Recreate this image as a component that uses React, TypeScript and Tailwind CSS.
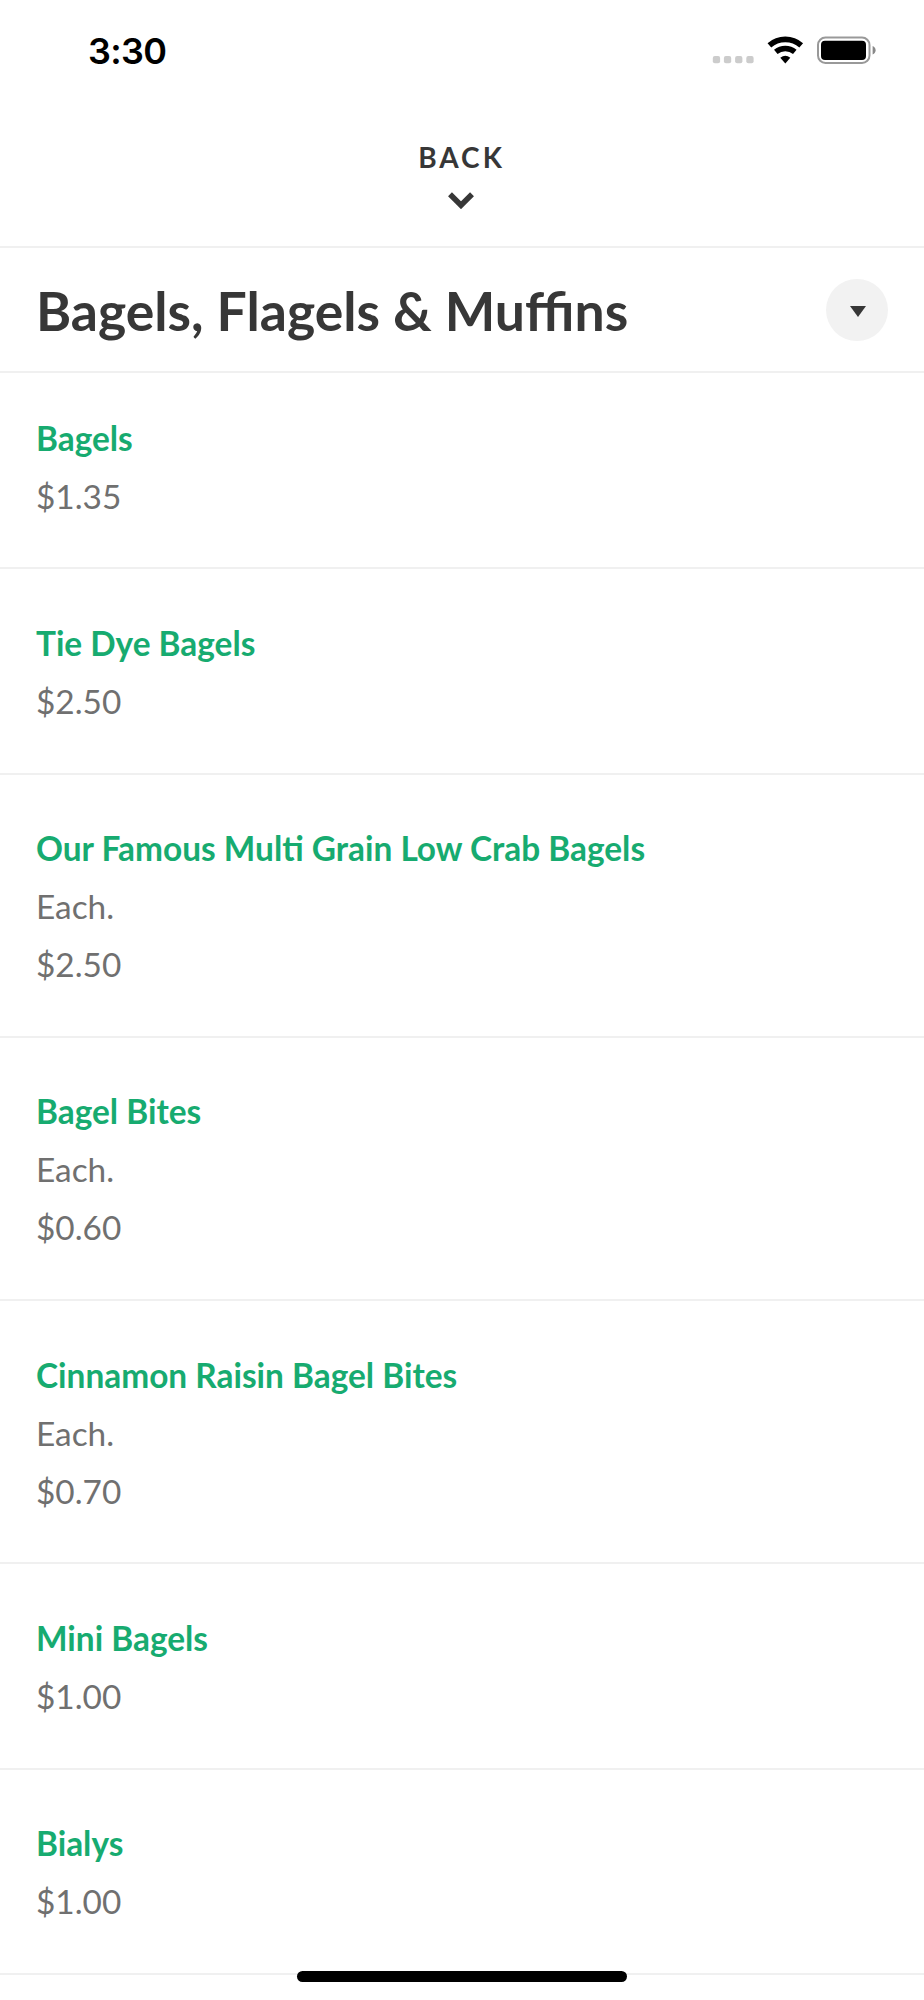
const items: { name: string; lines: string[] }[] = [
  { name: "Bagels", lines: ["$1.35"] },
  { name: "Tie Dye Bagels", lines: ["$2.50"] },
  { name: "Our Famous Multi Grain Low Crab Bagels", lines: ["Each.", "$2.50"] },
  { name: "Bagel Bites", lines: ["Each.", "$0.60"] },
  { name: "Cinnamon Raisin Bagel Bites", lines: ["Each.", "$0.70"] },
  { name: "Mini Bagels", lines: ["$1.00"] },
  { name: "Bialys", lines: ["$1.00"] },
];

function StatusBar() {
  return (
    <div className="flex h-[100px] items-center justify-between pl-[88px] pr-[48px]">
      <span className="pt-[2px] font-[Inter,sans-serif] text-[36px] font-semibold leading-[44px] tracking-[-0.7px] text-black">3:30</span>
      <svg width="164" height="32" viewBox="0 0 164 32">
        <g fill="#cccccc">
          <rect x="0.8" y="22" width="7.300" height="7.300" rx="2" />
          <rect x="11.900" y="22" width="7.300" height="7.300" rx="2" />
          <rect x="23.100" y="22" width="7.300" height="7.300" rx="2" />
          <rect x="34.300" y="22" width="7.300" height="7.300" rx="2" />
        </g>
        <g fill="none" stroke="#000" strokeWidth="5.600">
          <path d="M57.400 11.400A24 24 0 0 1 89.200 11.400" />
          <path d="M63.800 17.900A15 15 0 0 1 82.800 17.900" />
        </g>
        <path d="M68.300 23.800A8 8 0 0 1 78.300 23.800L73.300 29.400Z" />
        <rect x="106" y="3.500" width="51.500" height="25.500" rx="7.500" fill="none" stroke="#999" strokeWidth="2" />
        <rect x="109" y="6.700" width="45" height="19.300" rx="4" />
        <path d="M160.600 12v8.500q3-1.300 3-4.250t-3-4.250" fill="#888" />
      </svg>
    </div>
  );
}

export default function App() {
  return (
    <div className="relative h-[2000px] w-[924px] overflow-hidden bg-white font-[Lato,sans-serif]">
      <StatusBar />
      <button className="flex h-[148px] w-full flex-col items-center border-b-2 border-[#f0f0f0] pr-[3px] pt-[40px]">
        <span className="pl-[2px] text-[28px] font-bold leading-[34px] tracking-[3px] text-[#373737]">BACK</span>
        <svg className="mt-[17px]" width="28" height="18" viewBox="0 0 28 18" fill="none" stroke="#373737" strokeWidth="5.500">
          <path d="M3 3.300l11 11l11-11" />
        </svg>
      </button>
      <header className="flex h-[125px] items-center justify-between border-b-2 border-[#f0f0f0] px-9 pt-px">
        <h1 className="text-[53.5px] font-bold leading-[64px] text-[#373737]">Bagels, Flagels &amp; Muffins</h1>
        <div className="flex size-[62px] items-center justify-center rounded-full bg-[#f2f2f2] pl-[2px] pt-[2px]">
          <svg width="16" height="11" viewBox="0 0 16 11" fill="#373737"><path d="M0 0h16l-8 11z" /></svg>
        </div>
      </header>
      <main className="-mt-[9px]">
        {items.map((item) => (
          <section key={item.name} className="border-b-2 border-[#f0f0f0] px-9 pt-[44.6px] pb-[42.7px] text-[33.4px] leading-[58px]">
            <h2 className="font-bold text-[#17ab70]">{item.name}</h2>
            {item.lines.map((line) => (
              <p key={line} className="text-[#707070]">{line}</p>
            ))}
          </section>
        ))}
      </main>
      <div className="absolute bottom-[18px] left-[297px] h-[11px] w-[330px] rounded-full bg-black" />
    </div>
  );
}
